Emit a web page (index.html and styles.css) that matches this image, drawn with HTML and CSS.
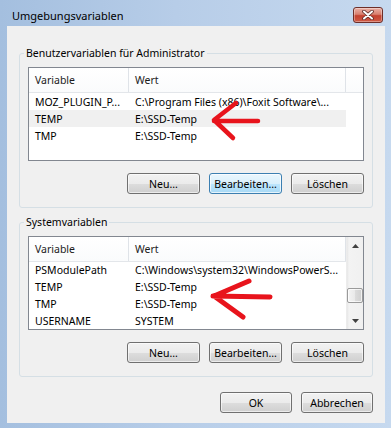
FILE: index.html
```html
<!DOCTYPE html>
<html lang="de">
<head>
<meta charset="utf-8">
<title>Umgebungsvariablen</title>
<link rel="stylesheet" href="styles.css">
</head>
<body>
<div class="window">
  <div class="titlebar">
    <span class="title">Umgebungsvariablen</span>
    <div class="close">
      <svg width="14" height="10" viewBox="0 0 14 10">
        <path d="M3 1.5 L11 8.5 M11 1.5 L3 8.5" stroke="#5c2a25" stroke-width="3.6" stroke-linecap="round"/>
        <path d="M3 1.5 L11 8.5 M11 1.5 L3 8.5" stroke="#ffffff" stroke-width="2" stroke-linecap="round"/>
      </svg>
    </div>
  </div>
  <div class="client">
    <fieldset class="group">
      <legend>Benutzervariablen für Administrator</legend>
      <div class="listview">
        <div class="lv-main">
          <div class="lv-header">
            <div class="hcol c1">Variable</div>
            <div class="hcol c2">Wert</div>
            <div class="hcol c3"></div>
          </div>
          <div class="row"><div class="cell c1">MOZ_PLUGIN_P...</div><div class="cell c2">C:\Program Files (x86)\Foxit Software\...</div></div>
          <div class="row sel"><div class="cell c1">TEMP</div><div class="cell c2">E:\SSD-Temp</div></div>
          <div class="row"><div class="cell c1">TMP</div><div class="cell c2">E:\SSD-Temp</div></div>
        </div>
      </div>
      <div class="btnrow">
        <div class="btn">Neu...</div>
        <div class="btn focus">Bearbeiten...</div>
        <div class="btn">Löschen</div>
      </div>
    </fieldset>
    <fieldset class="group">
      <legend>Systemvariablen</legend>
      <div class="listview">
        <div class="lv-main narrow">
          <div class="lv-header">
            <div class="hcol c1">Variable</div>
            <div class="hcol c2">Wert</div>
          </div>
          <div class="row"><div class="cell c1">PSModulePath</div><div class="cell c2">C:\Windows\system32\WindowsPowerS...</div></div>
          <div class="row"><div class="cell c1">TEMP</div><div class="cell c2">E:\SSD-Temp</div></div>
          <div class="row"><div class="cell c1">TMP</div><div class="cell c2">E:\SSD-Temp</div></div>
          <div class="row"><div class="cell c1">USERNAME</div><div class="cell c2">SYSTEM</div></div>
        </div>
        <div class="scrollbar">
          <div class="sb-arrow"><svg width="7" height="4" viewBox="0 0 7 4"><path d="M0 4 L3.5 0 L7 4 Z" fill="#404040"/></svg></div>
          <div class="sb-track"><div class="sb-thumb"></div></div>
          <div class="sb-arrow"><svg width="7" height="4" viewBox="0 0 7 4"><path d="M0 0 L7 0 L3.5 4 Z" fill="#404040"/></svg></div>
        </div>
      </div>
      <div class="btnrow">
        <div class="btn">Neu...</div>
        <div class="btn">Bearbeiten...</div>
        <div class="btn">Löschen</div>
      </div>
    </fieldset>
    <div class="btnrow dlg">
      <div class="btn">OK</div>
      <div class="btn">Abbrechen</div>
    </div>
  </div>
  <svg class="arrows" width="391" height="428" viewBox="0 0 391 428">
    <path d="M258 121 L214 121 M236 103 L214 120 L233 138" fill="none" stroke="#e8141c" stroke-width="4.5" stroke-linecap="round" stroke-linejoin="round"/>
    <path d="M270 297 L213 296 M249 281 L214 296 L243 317" fill="none" stroke="#e8141c" stroke-width="5" stroke-linecap="round" stroke-linejoin="round"/>
  </svg>
</div>
</body>
</html>
```

FILE: styles.css
```css
* { box-sizing: border-box; }

body {
  margin: 0;
  font-family: "Noto Sans", "Open Sans", sans-serif;
  font-size: 10.5px;
  color: #000;
}

.window {
  position: relative;
  width: 391px;
  height: 428px;
  overflow: hidden;
  display: flex;
  flex-direction: column;
  background: linear-gradient(90deg, #a4bfdf 0%, #b7cde8 45%, #c6d9ef 100%);
}

.titlebar {
  flex: none;
  height: 26px;
  padding: 4px 8px 0 12px;
  display: flex;
  align-items: center;
  justify-content: space-between;
}

.title {
  font-size: 11px;
  color: #000;
}

.close {
  width: 30px;
  height: 16px;
  border: 1px solid #6e2f29;
  border-radius: 3px;
  background: linear-gradient(#eab1a7 0%, #d9806f 45%, #c4412f 55%, #cf5a45 100%);
  box-shadow: inset 0 0 0 1px rgba(255, 255, 255, 0.35);
  display: flex;
  align-items: center;
  justify-content: center;
}

.client {
  flex: 1;
  margin: 0 6px 5px 7px;
  background: #f0f0f0;
  padding: 20px 12px 0;
  display: flex;
  flex-direction: column;
}

.group {
  margin: 0;
  padding: 7px 8px 13px;
  border: 1px solid #d5dfe5;
  border-radius: 3px;
  min-width: 0;
}

.group + .group {
  margin-top: 7px;
}

.group legend {
  padding: 0 2px;
  margin-left: -4px;
  line-height: 14px;
}

.listview {
  height: 94px;
  border: 1px solid #828790;
  background: #fff;
  display: flex;
}

.lv-main {
  flex: 1;
  display: flex;
  flex-direction: column;
  min-width: 0;
}

.lv-main.narrow {
  flex: none;
  width: 317px;
}

.lv-header {
  flex: none;
  height: 25px;
  display: flex;
  border-bottom: 1px solid #e3e6ea;
  background: linear-gradient(#ffffff, #fafbfc);
}

.hcol {
  padding-left: 6px;
  display: flex;
  align-items: center;
  border-right: 1px solid #dfe3e8;
  color: #1b1b1b;
}

.c1 { width: 100px; flex: none; }
.c2 { width: 217px; flex: none; }
.hcol.c3 { flex: 1; border-right: none; }

.row {
  height: 17px;
  display: flex;
  align-items: center;
  width: 317px;
}

.row.sel {
  background: #f0f0f0;
}

.cell {
  padding-left: 6px;
  white-space: nowrap;
  overflow: hidden;
}

.scrollbar {
  flex: 1;
  display: flex;
  flex-direction: column;
  background: linear-gradient(90deg, #e6e6e6 0, #f3f3f3 2px, #f0f0f0 100%);
  border-left: 1px solid #ececec;
}

.sb-arrow {
  flex: none;
  height: 17px;
  display: flex;
  align-items: center;
  justify-content: center;
}

.sb-track {
  flex: 1;
  padding-top: 34px;
}

.sb-thumb {
  width: 16px;
  height: 15px;
  border: 1px solid #9a9a9a;
  border-radius: 2px;
  background: linear-gradient(90deg, #f4f4f4 0%, #e9e9e9 50%, #dcdcdc 51%, #cfcfcf 100%);
  box-shadow: inset 0 0 0 1px rgba(255, 255, 255, 0.7);
}

.btnrow {
  display: flex;
  justify-content: flex-end;
  gap: 9px;
  margin-top: 12px;
}

.btnrow.dlg {
  margin-top: 15px;
}

.btn {
  width: 73px;
  height: 21px;
  border: 1px solid #707070;
  border-radius: 3px;
  background: linear-gradient(#f2f2f2 0%, #ebebeb 50%, #dddddd 51%, #cfcfcf 100%);
  box-shadow: inset 0 0 0 1px rgba(255, 255, 255, 0.6);
  display: flex;
  align-items: center;
  justify-content: center;
  color: #000;
}

.dlg .btn {
  width: 72px;
}

.btn.focus {
  border-color: #3c7fb1;
  background: linear-gradient(#eaf6fd 0%, #d9f0fc 50%, #bee6fd 51%, #a7d9f5 100%);
  box-shadow: inset 0 0 0 1px rgba(255, 255, 255, 0.7);
}

.arrows {
  position: absolute;
  left: 0;
  top: 0;
  pointer-events: none;
}
```
